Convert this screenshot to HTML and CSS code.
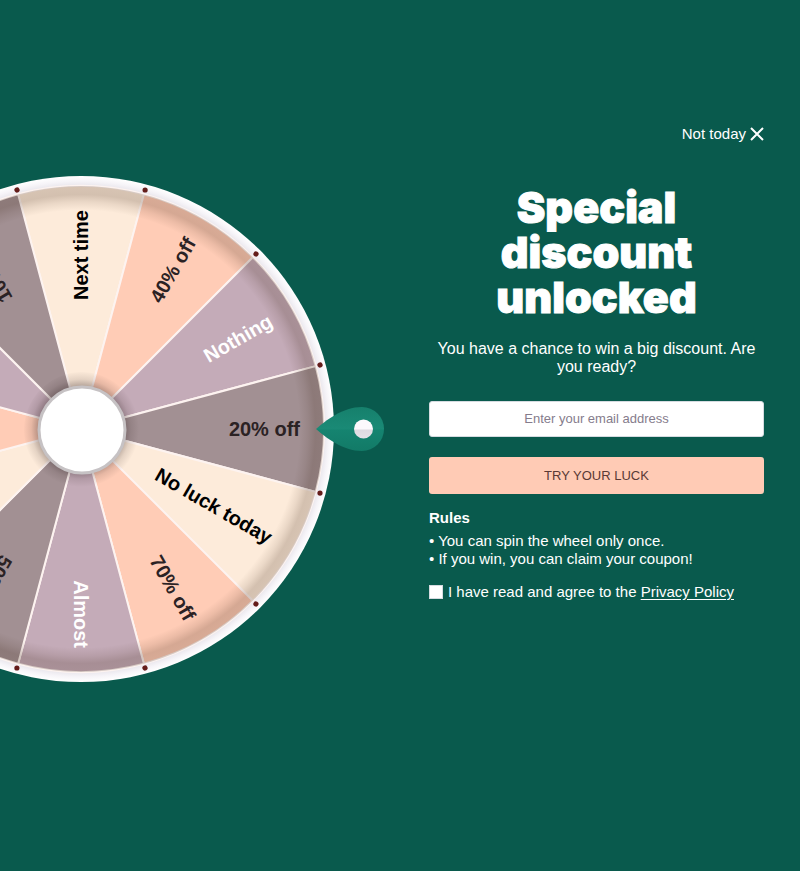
FILE: index.html
```html
<!DOCTYPE html>
<html lang="en">
<head>
<meta charset="utf-8">
<meta name="viewport" content="width=device-width, initial-scale=1">
<title>Special discount unlocked</title>
<link rel="stylesheet" href="styles.css">
</head>
<body>
<main class="popup">
  <div class="wheel">
    <svg class="wheel-art" viewBox="0 0 384 520" role="img" aria-label="Prize wheel">
      <defs>
        <path id="slice" d="M0 0L-62.9-234.7A243 243 0 0 1 62.9-234.7Z"/>
        <circle id="peg" cx="64.1" cy="-239" r="2.6"/>
        <radialGradient id="edge" gradientUnits="userSpaceOnUse" cx="0" cy="0" r="243">
          <stop offset=".9" stop-color="#402818" stop-opacity="0"/>
          <stop offset=".935" stop-color="#402818" stop-opacity=".1"/>
          <stop offset=".965" stop-color="#402818" stop-opacity=".22"/>
          <stop offset="1" stop-color="#402818" stop-opacity=".2"/>
        </radialGradient>
        <radialGradient id="hubshade" gradientUnits="userSpaceOnUse" cx="0" cy="0" r="58">
          <stop offset=".74" stop-color="#302020" stop-opacity=".34"/>
          <stop offset=".86" stop-color="#302020" stop-opacity=".12"/>
          <stop offset="1" stop-color="#302020" stop-opacity="0"/>
        </radialGradient>
        <radialGradient id="rim" gradientUnits="userSpaceOnUse" cx="0" cy="0" r="253">
          <stop offset=".96" stop-color="#e9e6ec"/>
          <stop offset=".98" stop-color="#f6f4f8"/>
          <stop offset="1" stop-color="#fff"/>
        </radialGradient>
        <linearGradient id="pin" x1="0" y1="0" x2="0" y2="1">
          <stop offset="0" stop-color="#16806c"/>
          <stop offset=".5" stop-color="#1a8a76"/>
          <stop offset=".52" stop-color="#158470"/>
          <stop offset="1" stop-color="#127a67"/>
        </linearGradient>
        <linearGradient id="pindot" x1="0" y1="0" x2="0" y2="1">
          <stop offset=".5" stop-color="#fbf9fc"/>
          <stop offset=".55" stop-color="#dfdbe2"/>
          <stop offset="1" stop-color="#e6e2e8"/>
        </linearGradient>
      </defs>
      <g transform="translate(81 260)">
        <circle r="253" fill="url(#rim)"/>
        <g class="slices">
          <use href="#slice" class="cream"/>
          <use href="#slice" class="peach" transform="rotate(30)"/>
          <use href="#slice" class="mauve" transform="rotate(60)"/>
          <use href="#slice" class="taupe" transform="rotate(90)"/>
          <use href="#slice" class="cream" transform="rotate(120)"/>
          <use href="#slice" class="peach" transform="rotate(150)"/>
          <use href="#slice" class="mauve" transform="rotate(180)"/>
          <use href="#slice" class="taupe" transform="rotate(210)"/>
          <use href="#slice" class="cream" transform="rotate(240)"/>
          <use href="#slice" class="peach" transform="rotate(270)"/>
          <use href="#slice" class="mauve" transform="rotate(300)"/>
          <use href="#slice" class="taupe" transform="rotate(330)"/>
        </g>
        <circle r="243" fill="url(#edge)"/>
        <g class="pegs">
          <use href="#peg"/>
          <use href="#peg" transform="rotate(30)"/>
          <use href="#peg" transform="rotate(60)"/>
          <use href="#peg" transform="rotate(90)"/>
          <use href="#peg" transform="rotate(120)"/>
          <use href="#peg" transform="rotate(150)"/>
          <use href="#peg" transform="rotate(180)"/>
          <use href="#peg" transform="rotate(-30)"/>
        </g>
        <g class="labels">
          <text class="black" x="219" y="7" transform="rotate(-90)">Next time</text>
          <text x="219" y="7" transform="rotate(-60)">40% off</text>
          <text class="light" x="219" y="7" transform="rotate(-30)">Nothing</text>
          <text x="219" y="7">20% off</text>
          <text class="black" x="219" y="7" transform="rotate(30)">No luck today</text>
          <text x="219" y="7" transform="rotate(60)">70% off</text>
          <text class="light" x="219" y="7" transform="rotate(90)">Almost</text>
          <text x="219" y="7" transform="rotate(120)">50% off</text>
          <text x="219" y="7" transform="rotate(240)">10% off</text>
        </g>
        <circle r="58" cx="1" cy="1" fill="url(#hubshade)"/>
        <circle class="hub" cx="1" cy="1" r="43"/>
      </g>
      <path d="M316 260C325 252 343 238 362 238A22 22 0 0 1 362 282C343 282 325 268 316 260Z" fill="url(#pin)"/>
      <circle cx="363.500" cy="260" r="9.500" fill="url(#pindot)"/>
    </svg>
  </div>

  <section class="panel">
    <button type="button" class="dismiss">Not today
      <svg class="cross" viewBox="0 0 14 14" aria-hidden="true"><path d="M1 1L13 13M13 1L1 13"/></svg>
    </button>
    <h1>Special discount unlocked</h1>
    <p class="lead">You have a chance to win a big discount. Are you ready?</p>
    <form>
      <input class="email" type="email" placeholder="Enter your email address" aria-label="Email address">
      <button type="submit" class="submit">TRY YOUR LUCK</button>
      <h2>Rules</h2>
      <ul>
        <li>• You can spin the wheel only once.</li>
        <li>• If you win, you can claim your coupon!</li>
      </ul>
      <div class="consent">
        <input type="checkbox" id="agree">
        <label for="agree">I have read and agree to the <a href="#privacy">Privacy Policy</a></label>
      </div>
    </form>
  </section>
</main>
</body>
</html>
```
FILE: styles.css
```css
* {
  box-sizing: border-box;
}

body {
  margin: 0;
  background: #095a4d;
  color: #fff;
  font: 16px/18px "Liberation Sans", Arial, sans-serif;
}

.popup {
  display: flex;
  min-height: 100vh;
  align-items: center;
  padding-bottom: 14px;
}

.wheel {
  flex: 0 0 48%;
}

.wheel-art {
  display: block;
  width: 100%;
}

.slices {
  stroke: #fdf3f0;
  stroke-width: 2;
}

.cream { fill: #fdebda; }
.peach { fill: #ffccb6; }
.mauve { fill: #c4abb8; }
.taupe { fill: #a29093; }

.pegs {
  fill: #641c1a;
}

.labels {
  fill: #2b2224;
  font-size: 20px;
  font-weight: bold;
  text-anchor: end;
}

.labels .black { fill: #000; }
.labels .light { fill: #fff; }

.hub {
  fill: #fff;
  stroke: #c6c2c4;
  stroke-width: 3;
}

.panel {
  flex: 1;
  display: flex;
  flex-direction: column;
  padding: 0 36px 132px 45px;
}

button {
  border: 0;
  font-family: inherit;
  cursor: pointer;
}

.dismiss {
  display: flex;
  align-items: center;
  align-self: flex-end;
  gap: 4px;
  padding: 0;
  background: none;
  color: inherit;
  font-size: 15px;
  line-height: 18px;
}

.cross {
  width: 14px;
  height: 14px;
  fill: none;
  stroke: #fff;
  stroke-width: 2;
}

h1 {
  margin: 42px 48px 20px;
  font: 900 43px/45px "Arial Black", Inter, sans-serif;
  text-align: center;
  -webkit-text-stroke: 1px #fff;
}

.lead {
  margin: 0 0 25px;
  text-align: center;
}

form {
  display: flex;
  flex-direction: column;
}

.email {
  height: 36px;
  padding: 0 12px;
  border: 1px solid #d5dbe0;
  border-radius: 3px;
  background: #fff;
  color: #333;
  font: 13px "Liberation Sans", Arial, sans-serif;
  text-align: center;
}

.email::placeholder {
  color: #857c8c;
}

.submit {
  height: 37px;
  margin: 20px 0 15px;
  border-radius: 3px;
  background: #ffcbb5;
  color: #5a3a35;
  font-size: 13px;
}

h2 {
  margin: 0 0 5px;
  font-size: 15px;
  line-height: 18px;
}

ul {
  margin: 0 0 15px;
  padding: 0;
  list-style: none;
  font-size: 15px;
}

.consent {
  display: flex;
  align-items: center;
  gap: 5px;
  font-size: 15px;
}

.consent input {
  appearance: none;
  flex: none;
  width: 14px;
  height: 14px;
  margin: 0;
  border: 1px solid #d5dbe0;
  background: #fff;
}

.consent input:checked {
  background: #ffcbb5;
}

.consent a {
  color: inherit;
  text-underline-offset: 2px;
}
```
